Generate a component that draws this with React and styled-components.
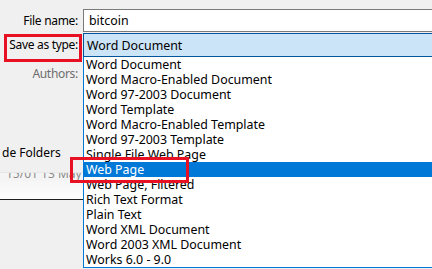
import styled, { createGlobalStyle } from 'styled-components';

const GlobalStyle = createGlobalStyle`
  html, body {
    margin: 0;
    padding: 0;
    background: #f0f0f0;
    overflow: hidden;
  }
  body {
    font-family: "Noto Sans", "Open Sans", sans-serif;
    font-size: 12px;
    color: #000;
  }
`

const Dialog = styled.div`
  position: relative;
  width: 432px;
  height: 269px;
  display: flex;
  overflow: hidden;
`

const Labels = styled.div`
  width: 83px;
  flex-shrink: 0;
  display: flex;
  flex-direction: column;
  padding-top: 9px;
`

const Label = styled.div`
  height: ${p => p.h}px;
  margin-top: ${p => p.mt || 0}px;
  display: flex;
  align-items: center;
  justify-content: flex-end;
  padding-right: 5px;
  letter-spacing: -0.3px;
  color: ${p => (p.muted ? '#6d6d6d' : '#000')};
  white-space: nowrap;
`

const FolderToggle = styled.div`
  margin-top: 64px;
  height: 16px;
  line-height: 16px;
  padding-left: 2px;
  white-space: nowrap;
`

const FileListPeek = styled.div`
  margin-top: 11px;
  height: 8px;
  overflow: hidden;
  border-top: 1px solid #e6e6e6;
  background: #f4f4f4;
`

const PeekText = styled.div`
  margin-top: -7px;
  padding-left: 6px;
  color: #8a8a8a;
  white-space: nowrap;
  line-height: 15px;
`

const Fade = styled.div`
  height: 18px;
  background: linear-gradient(#f6f6f6, #fdfdfd);
  border-bottom: 1px solid #1e1e1e;
`

const Fields = styled.div`
  flex: 1;
  margin-right: -20px;
  padding-top: 9px;
  display: flex;
  flex-direction: column;
  font-size: 12.4px;
`

const TextInput = styled.div`
  height: 21px;
  border: 1px solid #7a7a7a;
  background: #fff;
  display: flex;
  align-items: center;
  padding-left: 5px;
`

const TypeSelect = styled.div`
  margin-top: 1px;
  height: 22px;
  border: 1px solid #005499;
  background: #cce4f7;
  display: flex;
  align-items: center;
  padding-left: 3px;
`

const OptionList = styled.ul`
  list-style: none;
  margin: 0;
  padding: 0;
  background: #fff;
  border: 1px solid #0078d7;
  border-top: none;
`

const Option = styled.li`
  height: 15px;
  line-height: 15px;
  padding-left: 2px;
  white-space: nowrap;
  background: ${p => (p.active ? '#0078d7' : 'transparent')};
  color: ${p => (p.active ? '#fff' : '#000')};
`

const Callout = styled.div`
  position: absolute;
  left: ${p => p.x}px;
  top: ${p => p.y}px;
  width: ${p => p.w}px;
  height: ${p => p.h}px;
  border: 3px solid #e81123;
  box-sizing: border-box;
  pointer-events: none;
`

const types = [
  'Word Document',
  'Word Macro-Enabled Document',
  'Word 97-2003 Document',
  'Word Template',
  'Word Macro-Enabled Template',
  'Word 97-2003 Template',
  'Single File Web Page',
  'Web Page',
  'Web Page, Filtered',
  'Rich Text Format',
  'Plain Text',
  'Word XML Document',
  'Word 2003 XML Document',
  'Works 6.0 - 9.0',
];

const App = () => {
  return (
    <>
      <GlobalStyle />
      <Dialog>
        <Labels>
          <Label h={23}>File name:</Label>
          <Label h={25}>Save as type:</Label>
          <Label h={16} mt={8} muted>Authors:</Label>
          <FolderToggle>de Folders</FolderToggle>
          <FileListPeek>
            <PeekText>15/01 13 May 2018</PeekText>
          </FileListPeek>
          <Fade />
        </Labels>
        <Fields>
          <TextInput>bitcoin</TextInput>
          <TypeSelect>Word Document</TypeSelect>
          <OptionList>
            {types.map(t => (
              <Option key={t} active={t === 'Web Page'}>{t}</Option>
            ))}
          </OptionList>
        </Fields>
        <Callout x={4} y={34} w={78} h={28} />
        <Callout x={70} y={157} w={119} h={26} />
      </Dialog>
    </>
  )
};

export default App;
